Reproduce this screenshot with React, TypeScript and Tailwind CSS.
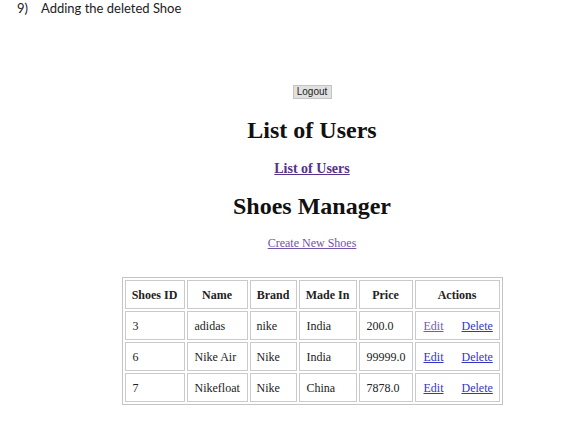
import React from "react";

type Shoe = {
  id: number;
  name: string;
  brand: string;
  madeIn: string;
  price: string;
  visited?: boolean;
};

const shoes: Shoe[] = [
  { id: 3, name: "adidas", brand: "nike", madeIn: "India", price: "200.0", visited: true },
  { id: 6, name: "Nike Air", brand: "Nike", madeIn: "India", price: "99999.0" },
  { id: 7, name: "Nikefloat", brand: "Nike", madeIn: "China", price: "7878.0" },
];

const serif = { fontFamily: '"Liberation Serif", "Times New Roman", serif' };

export default function App() {
  return (
    <div className="w-[569px] h-[425px] bg-white overflow-hidden text-[#111]">
      {/* caption above the screenshot */}
      <div
        className="pl-[17px] text-[13px] leading-[16px] text-[#222] flex"
        style={{ fontFamily: "Lato, 'Open Sans', sans-serif" }}
      >
        <span className="w-[24px]">9)</span>
        <span>Adding the deleted Shoe</span>
      </div>

      <div className="pl-[55px] flex flex-col items-center" style={serif}>
        <button
          className="mt-[69px] h-[14px] w-[39px] bg-[#e1e1e1] border border-[#c4c4c4] text-[10px] leading-[12px] text-[#222]"
          style={{ fontFamily: '"Liberation Sans", Arial, sans-serif' }}
        >
          Logout
        </button>

        <h1 className="mt-[17px] text-[24px] leading-[28px] font-bold">List of Users</h1>

        <a href="#" className="mt-[17px] text-[14px] leading-[16px] font-bold text-[#55318a] underline">
          List of Users
        </a>

        <h1 className="mt-[15px] text-[24px] leading-[28px] font-bold">Shoes Manager</h1>

        <a href="#" className="mt-[15px] text-[12px] leading-[16px] text-[#7454a6] underline">
          Create New Shoes
        </a>

        <table className="mt-[26px] w-[381px] border border-[#c4c4c4] border-separate border-spacing-[2px] text-[12px] text-[#222]">
          <thead>
            <tr className="h-[29px] font-bold">
              <th className="w-[60px] border border-[#cacaca]">Shoes ID</th>
              <th className="w-[61px] border border-[#cacaca]">Name</th>
              <th className="w-[47px] border border-[#cacaca]">Brand</th>
              <th className="w-[58px] border border-[#cacaca]">Made In</th>
              <th className="w-[54px] border border-[#cacaca]">Price</th>
              <th className="border border-[#cacaca]">Actions</th>
            </tr>
          </thead>
          <tbody>
            {shoes.map((s) => (
              <tr key={s.id} className="h-[29px]">
                <td className="border border-[#cacaca] pl-[7px]">{s.id}</td>
                <td className="border border-[#cacaca] pl-[7px]">{s.name}</td>
                <td className="border border-[#cacaca] pl-[6px]">{s.brand}</td>
                <td className="border border-[#cacaca] pl-[7px]">{s.madeIn}</td>
                <td className="border border-[#cacaca] pl-[7px]">{s.price}</td>
                <td className="border border-[#cacaca] pl-[8px]">
                  <a href="#" className={`underline ${s.visited ? "text-[#7a5aa8]" : "text-[#3535c4]"}`}>
                    Edit
                  </a>
                  <a href="#" className="underline text-[#3535c4] ml-[18px]">
                    Delete
                  </a>
                </td>
              </tr>
            ))}
          </tbody>
        </table>
      </div>
    </div>
  );
}
